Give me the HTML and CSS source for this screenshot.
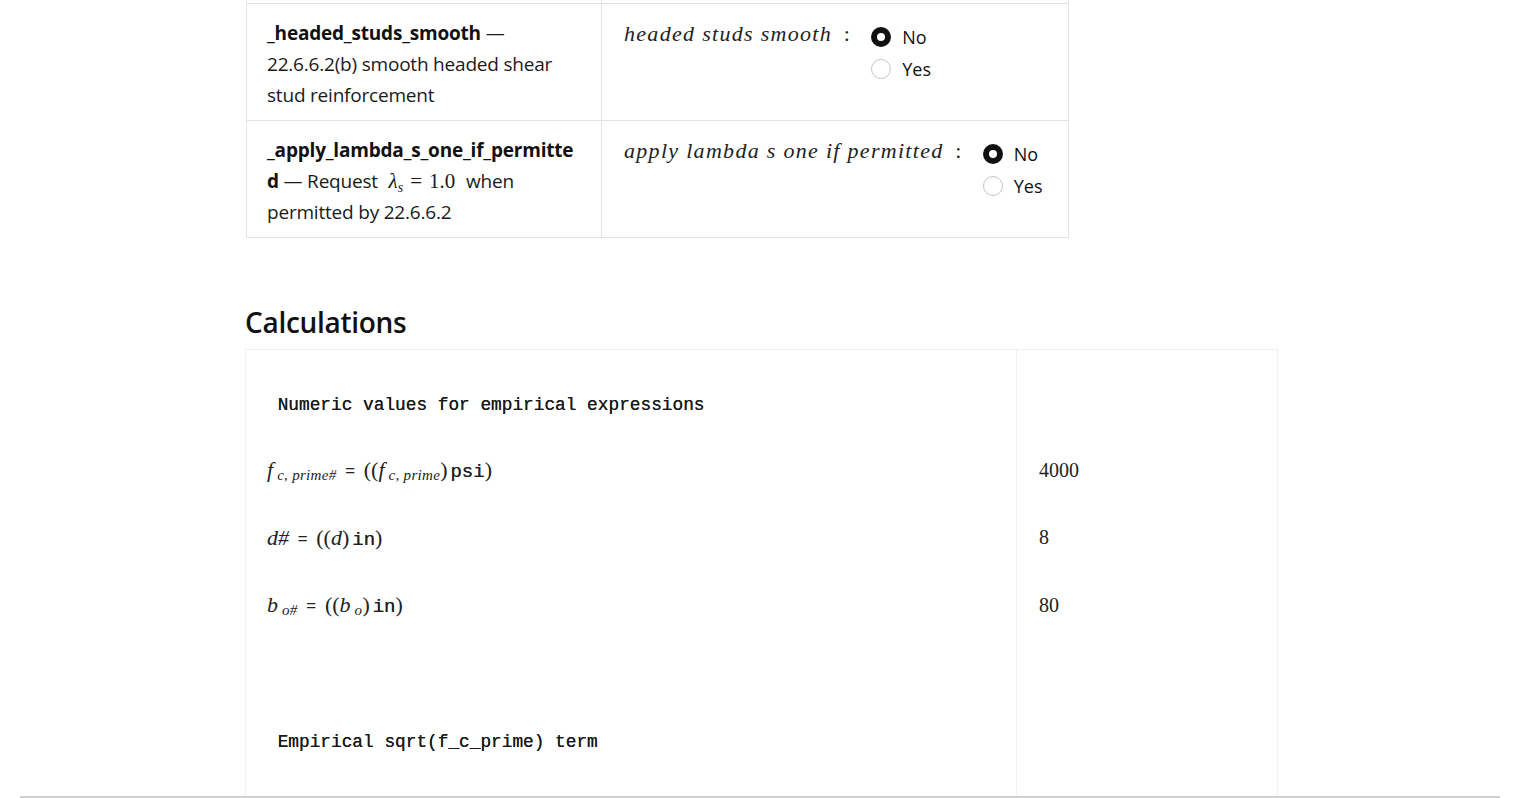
FILE: index.html
```html
<!DOCTYPE html>
<html lang="en">
<head>
<meta charset="utf-8">
<title>Punching shear</title>
<link rel="stylesheet" href="styles.css">
</head>
<body>
<main class="page">
  <table class="params">
    <colgroup><col class="col-name"><col class="col-ctrl"></colgroup>
    <tr class="prev"><td></td><td></td></tr>
    <tr>
      <td class="name"><b>_headed_studs_smooth</b> — 22.6.6.2(b) smooth headed shear stud reinforcement</td>
      <td class="ctrl">
        <div class="ctrl-row">
          <span class="math-label">headed studs smooth <span class="colon">:</span></span>
          <div class="radios">
            <label class="radio"><span class="dot on"></span>No</label>
            <label class="radio"><span class="dot"></span>Yes</label>
          </div>
        </div>
      </td>
    </tr>
    <tr>
      <td class="name"><b>_apply_lambda_s_one_if_permitted</b> — Request <span class="m"><i class="mi">λ</i><sub class="msub">s</sub><span class="mo">=</span>1.0</span> when permitted by 22.6.6.2</td>
      <td class="ctrl">
        <div class="ctrl-row">
          <span class="math-label">apply lambda s one if permitted <span class="colon">:</span></span>
          <div class="radios">
            <label class="radio"><span class="dot on"></span>No</label>
            <label class="radio"><span class="dot"></span>Yes</label>
          </div>
        </div>
      </td>
    </tr>
  </table>

  <h2 class="section-title">Calculations</h2>

  <table class="calc">
    <colgroup><col class="calc-expr"><col class="calc-val"></colgroup>
    <tr class="first">
      <td class="expr"><span class="comment"> Numeric values for empirical expressions</span></td>
      <td class="val"></td>
    </tr>
    <tr>
      <td class="expr"><span class="fx"><i class="v">f</i><sub class="s">c, prime#</sub></span> <span class="eq">=</span> <span class="fx">((<i class="v">f</i><sub class="s">c, prime</sub>)<span class="tt">psi</span>)</span></td>
      <td class="val">4000</td>
    </tr>
    <tr>
      <td class="expr"><span class="fx"><i class="v">d#</i></span> <span class="eq">=</span> <span class="fx">((<i class="v">d</i>)<span class="tt">in</span>)</span></td>
      <td class="val">8</td>
    </tr>
    <tr>
      <td class="expr"><span class="fx"><i class="v">b</i><sub class="s">o#</sub></span> <span class="eq">=</span> <span class="fx">((<i class="v">b</i><sub class="s">o</sub>)<span class="tt">in</span>)</span></td>
      <td class="val">80</td>
    </tr>
    <tr>
      <td class="expr"></td>
      <td class="val"></td>
    </tr>
    <tr>
      <td class="expr"><span class="comment"> Empirical sqrt(f_c_prime) term</span></td>
      <td class="val"></td>
    </tr>
    <tr>
      <td class="expr"></td>
      <td class="val"></td>
    </tr>
  </table>
</main>
<div class="hscroll"></div>
</body>
</html>
```

FILE: styles.css
```css
html, body {
  margin: 0;
  padding: 0;
  background: #ffffff;
  overflow: hidden;
  height: 798px;
}

body {
  font-family: "Open Sans", "Noto Sans", sans-serif;
  color: #1a1a1a;
  font-size: 19px;
}

.page {
  width: 1033px;
  margin: 0 0 0 245px;
}

/* parameters table */
.params {
  border-collapse: collapse;
  width: 823px;
  margin-left: 1px;
  table-layout: fixed;
}
.col-name { width: 355px; }
.params td {
  border: 1px solid #e3e3e3;
  vertical-align: top;
}
.params tr.prev td {
  height: 3px;
  padding: 0;
  border-top: none;
}
.params td.name {
  padding: 14px 20px 9px 20px;
  line-height: 31px;
  overflow-wrap: anywhere;
  letter-spacing: -0.2px;
}
.params td.name b {
  font-weight: 700;
  color: #111;
}
.params td.ctrl {
  padding: 14px 20px 9px 22px;
}

.ctrl-row {
  display: flex;
  align-items: flex-start;
  gap: 20px;
}

.math-label {
  font-family: "Liberation Serif", "DejaVu Serif", serif;
  font-style: italic;
  font-size: 22px;
  line-height: 31px;
  color: #222;
  letter-spacing: 1.3px;
  white-space: nowrap;
}
.math-label .colon {
  font-style: normal;
  margin-left: 5px;
}

.radios {
  display: flex;
  flex-direction: column;
  gap: 12px;
  padding-top: 9px;
}
.radio {
  display: flex;
  align-items: center;
  gap: 11px;
  font-size: 18px;
  line-height: 20px;
  color: #111;
}
.dot {
  box-sizing: border-box;
  width: 20px;
  height: 20px;
  border-radius: 50%;
  border: 1px solid #c4c4c4;
  background: #fff;
  display: inline-block;
}
.dot.on {
  border: 6px solid #111;
  background: #fff;
}

.m {
  font-family: "Liberation Serif", serif;
  font-size: 21px;
  margin: 0 6px;
  white-space: nowrap;
  letter-spacing: 0;
}
.mi { font-style: italic; }
.msub {
  font-family: "Liberation Serif", serif;
  font-style: italic;
  font-size: 14px;
  vertical-align: -4px;
  line-height: 0;
}
.mo { margin: 0 7px; }

/* section title */
.section-title {
  font-family: "Open Sans", sans-serif;
  font-weight: 600;
  font-size: 28px;
  letter-spacing: -0.3px;
  color: #111;
  margin: 64px 0 7px 0;
  line-height: 40px;
}

/* calculations */
.calc {
  border-collapse: collapse;
  width: 1033px;
  table-layout: fixed;
  border: 1px solid #f0f0f0;
}
.calc-expr { width: 771px; }
.calc td {
  height: 67.5px;
  padding: 0 0 0 21px;
  vertical-align: middle;
}
.calc td.val {
  border-left: 1px solid #f0f0f0;
  padding-left: 22px;
  font-family: "Liberation Serif", serif;
  font-size: 20px;
  color: #222;
}
.calc tr.first td {
  padding-top: 19px;
}

.comment {
  font-family: "Liberation Mono", monospace;
  font-size: 17.8px;
  white-space: pre;
  color: #1a1a1a;
  text-shadow: 0 0 0.4px #1a1a1a;
}

.expr {
  font-family: "Liberation Serif", serif;
  font-size: 22px;
  color: #222;
}
.fx { white-space: nowrap; }
.v { font-style: italic; }
.s {
  font-style: italic;
  font-size: 15px;
  vertical-align: -3px;
  line-height: 0;
  margin-left: 4px;
  letter-spacing: 0.3px;
}
.eq {
  font-family: "Open Sans", sans-serif;
  font-size: 18px;
  margin: 0 3px;
}
.tt {
  font-family: "Liberation Mono", monospace;
  font-size: 19px;
  font-weight: 400;
  margin-left: 3px;
  text-shadow: 0 0 0.5px #222;
}

.hscroll {
  position: fixed;
  left: 20px;
  right: 20px;
  bottom: 0;
  height: 2px;
  background: #cfcfcf;
}
```
